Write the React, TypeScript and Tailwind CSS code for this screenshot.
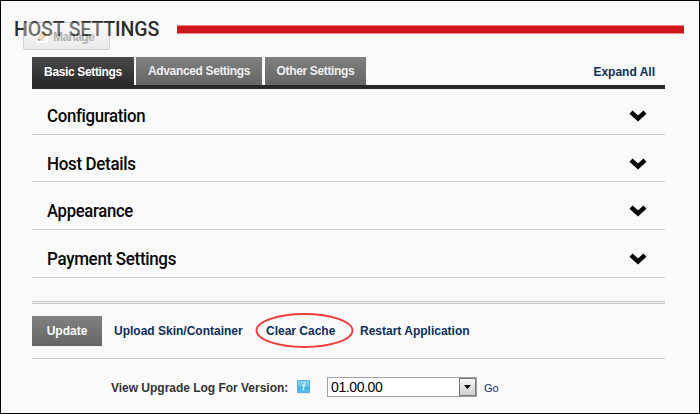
import React from "react";

const sections = [
  { title: "Configuration", row: "h-[46px] pt-[9px]", text: "scale-x-[0.933]" },
  { title: "Host Details", row: "h-[47px] pt-[11px]", text: "scale-x-[0.94]" },
  { title: "Appearance", row: "h-[48px] pt-[10px]", text: "scale-x-[0.925]" },
  { title: "Payment Settings", row: "h-[48px] pt-[10px]", text: "scale-x-[0.943]" },
];

function Chevron() {
  return (
    <svg className="mr-[18px] block h-[12px] w-[18px]" viewBox="0 0 18 12">
      <path d="M2 2.2 9 8.5 16 2.2" fill="none" stroke="#050505" strokeWidth="4.5" />
    </svg>
  );
}

function InfoIcon() {
  return (
    <svg className="ml-[7px] block h-[14px] w-[13px]" viewBox="0 0 13 14">
      <defs>
        <linearGradient id="info" x1="0" y1="0" x2="0" y2="1">
          <stop offset="0" stopColor="#8dd8f3" />
          <stop offset="0.5" stopColor="#63c3ea" />
          <stop offset="0.55" stopColor="#3fafe2" />
          <stop offset="1" stopColor="#55c0ee" />
        </linearGradient>
      </defs>
      <rect x="0" y="12" width="13" height="1.5" fill="#d9d9d9" />
      <rect x="0.5" y="0.5" width="12" height="12" rx="0.5" fill="url(#info)" stroke="#55aed6" />
      <path d="M6.9 3h1.5M5.4 5.1h1.9L6.3 9.3M5.2 9.5h2.2" fill="none" stroke="#fff" strokeWidth="1.1" />
    </svg>
  );
}

export default function App() {
  return (
    <div className="relative flex h-[414px] w-[700px] flex-col overflow-hidden border border-black bg-[#fafafa] font-['Liberation_Sans',Arial,sans-serif] text-[12px] text-[#333]">
      <header className="flex h-[56px] items-start pl-[12px]">
        <h1 className="mt-[16px] w-[164px] origin-left scale-x-[0.93] whitespace-nowrap pl-[1px] font-['Roboto',sans-serif] text-[21px] font-medium leading-[24px] tracking-[-0.15px] text-[#2c2c2c]">
          HOST SETTINGS
        </h1>
        <div className="mt-[24px] h-[9px] w-[507px] border-y border-[#e9868a] bg-[#d0171c]" />
      </header>
      <div className="absolute left-[22px] top-[21px] flex h-[28px] w-[87px] items-center rounded-[2px] border border-[#888] bg-gradient-to-b from-[#fafafa] to-[#cfcfcf] pl-[12px] opacity-[0.36]">
        <svg className="mt-[1px] h-[13px] w-[12px]" viewBox="0 0 12 13">
          <rect width="12" height="13" rx="1" fill="#fff" />
          <path d="M2 2h5M2 4h4M2 10h7" stroke="#999" />
          <path d="M3 9.5 9.5 3" stroke="#a96700" strokeWidth="4" />
          <path d="M3 9 9 3" stroke="#f5cf6c" strokeWidth="1.8" />
          <path d="M2 10.5 3.5 9" stroke="#111" strokeWidth="2" />
        </svg>
        <span className="ml-[5px] mt-[2px] text-[12px] font-bold leading-[14px] tracking-[-0.6px] text-[#333]">Manage</span>
      </div>

      <main className="ml-[31px] w-[633px]">
        <nav className="flex h-[32px] items-start border-b-4 border-[#282828] text-[12px] font-bold text-[#eee]">
          <div className="flex h-[29px] w-[102px] items-center justify-center bg-gradient-to-b from-[#4b4b4b] to-[#282828] text-white">
            <span className="whitespace-nowrap tracking-[-0.35px]">Basic Settings</span>
          </div>
          <div className="ml-[2px] flex h-[28px] w-[126px] items-center justify-center bg-gradient-to-b from-[#818181] to-[#656565]">
            <span className="whitespace-nowrap tracking-[-0.35px]">Advanced Settings</span>
          </div>
          <div className="ml-[3px] flex h-[28px] w-[101px] items-center justify-center bg-gradient-to-b from-[#818181] to-[#656565]">
            <span className="whitespace-nowrap tracking-[-0.35px]">Other Settings</span>
          </div>
          <span className="ml-auto mr-[10px] mt-[7px] whitespace-nowrap leading-[16px] text-[#0b2f5c]">Expand All</span>
        </nav>

        {sections.map((s) => (
          <div key={s.title} className={`flex items-center justify-between border-b border-[#c8c8c8] pl-[15px] ${s.row}`}>
            <h2 className={`origin-left whitespace-nowrap font-['Roboto',sans-serif] text-[18px] font-medium leading-[22px] tracking-[-0.33px] text-[#050505] ${s.text}`}>
              {s.title}
            </h2>
            <Chevron />
          </div>
        ))}

        <div className="mt-[23px] h-[3px] border-y border-[#c8c8c8]" />

        <div className="flex h-[55px] items-start border-b border-[#c8c8c8] pt-[12px] text-[12px] font-bold leading-[30px] text-[#0b2f5c]">
          <button className="h-[30px] w-[70px] bg-gradient-to-b from-[#818181] to-[#656565] text-white">Update</button>
          <span className="ml-[12px] w-[152px] whitespace-nowrap">Upload Skin/Container</span>
          <span className="relative w-[94px] whitespace-nowrap">
            Clear Cache
            <svg className="absolute -left-[11px] -top-[3px] h-[36px] w-[99px]" viewBox="0 0 99 36">
              <ellipse cx="49.5" cy="17.5" rx="48" ry="16.5" fill="none" stroke="#f23b3b" strokeWidth="1.8" />
            </svg>
          </span>
          <span className="whitespace-nowrap">Restart Application</span>
        </div>

        <div className="mt-[18px] flex h-[20px] items-center pl-[79px]">
          <span className="w-[179px] whitespace-nowrap pt-[1px] font-bold tracking-[-0.02px]">View Upgrade Log For Version:</span>
          <InfoIcon />
          <div className="ml-[17px] flex h-[20px] w-[150px] shrink-0 items-center justify-between border border-[#a0a0a5] bg-white pl-[3px]">
            <span className="text-[14px] leading-[16px] tracking-[-0.4px] text-black">01.00.00</span>
            <span className="flex h-[18px] w-[17px] items-center justify-center border border-[#777] bg-gradient-to-b from-[#f7f7f7] to-[#d0d0d0]">
              <svg className="h-[4px] w-[7px]" viewBox="0 0 7 4">
                <path d="M0 0h7L3.5 4z" fill="#000" />
              </svg>
            </span>
          </div>
          <span className="ml-[7px] pt-[2px] text-[11px] text-[#0b2f5c]">Go</span>
        </div>
      </main>
    </div>
  );
}
